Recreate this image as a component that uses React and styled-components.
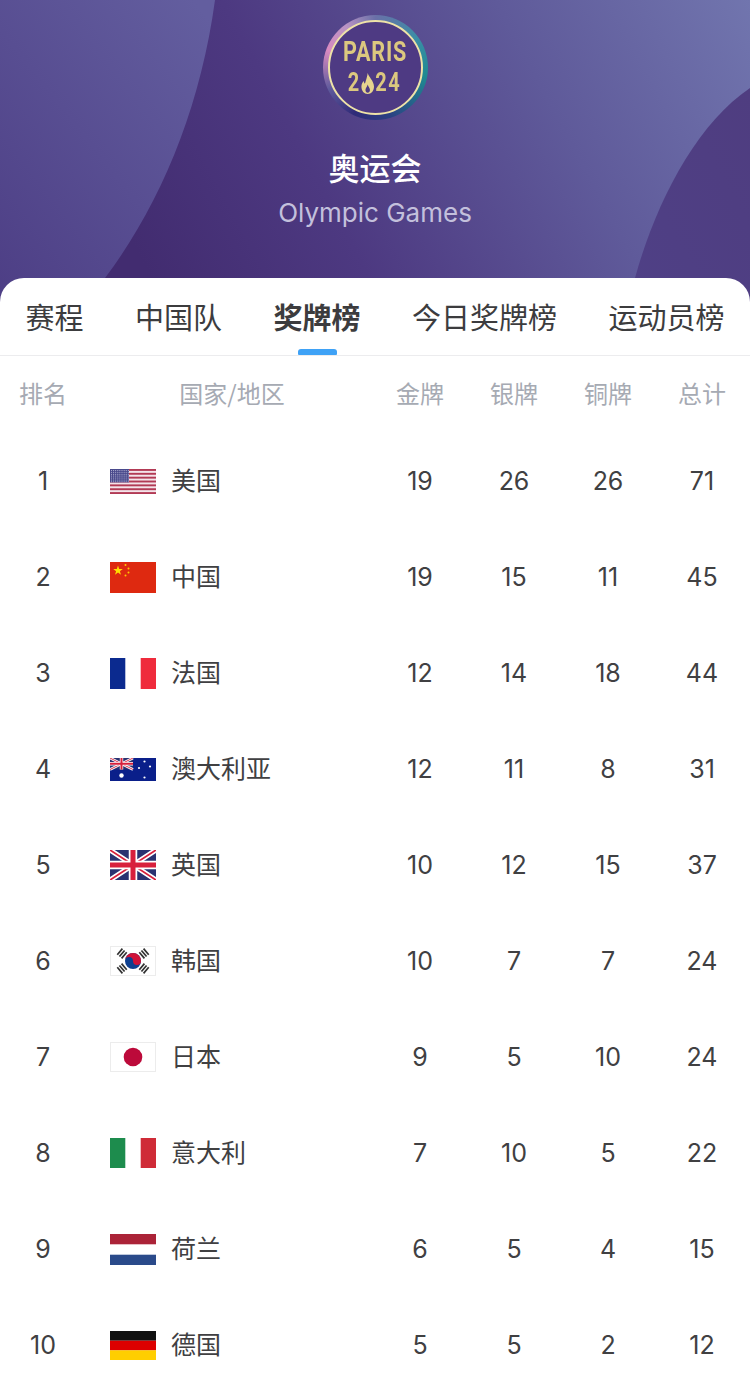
import React from "react";
import styled, { createGlobalStyle } from "styled-components";

const GlobalStyle = createGlobalStyle`
  html, body { margin: 0; padding: 0; background: #fff; overflow: hidden; }
  body { font-family: Inter, "Noto Sans CJK SC", sans-serif; }
`;

const Page = styled.div`
  width: 750px;
  height: 1385px;
  overflow: hidden;
  background: #fff;
`;

const Hero = styled.header`
  position: relative;
  height: 302px;
  margin-bottom: -24px;
  display: flex;
  flex-direction: column;
  align-items: center;
  padding-top: 15px;
  box-sizing: border-box;
  overflow: hidden;
  background: linear-gradient(62deg, #422c70 18%, #4d3981 42%, #5f5a9a 72%, #7175ae 100%);
`;

const HeroCurves = styled.svg`
  position: absolute;
  inset: 0;
  width: 750px;
  height: 302px;
`;

const Badge = styled.div`
  position: relative;
  width: 105px;
  height: 105px;
  border-radius: 50%;
  display: flex;
  align-items: center;
  justify-content: center;
  background: conic-gradient(from 0deg, #6a70a8 0deg, #3a8ea6 55deg, #1f8a92 100deg, #2b3f82 165deg, #2f2a78 205deg, #5f5a9c 245deg, #d98bc0 290deg, #b893c4 325deg, #6a70a8 360deg);
  filter: blur(0.5px);
`;

const BadgeFace = styled.div`
  width: 95px;
  height: 95px;
  box-sizing: border-box;
  border: 2.5px solid #eee2a8;
  border-radius: 50%;
  padding-bottom: 2px;
  background: #4e3a83;
  display: flex;
  flex-direction: column;
  align-items: center;
  justify-content: center;
  color: #dcc87f;
  font-family: "Roboto", sans-serif;
  font-weight: 700;
`;

const BadgeLine = styled.div`
  display: flex;
  align-items: center;
  font-size: ${(p) => p.$size}px;
  line-height: ${(p) => p.$line}px;
  letter-spacing: ${(p) => p.$track}px;
  transform: scaleX(${(p) => p.$squeeze});
  white-space: nowrap;
`;

const HeroTitle = styled.h1`
  position: relative;
  margin: 27px 0 0;
  font-family: "Noto Sans CJK SC", sans-serif;
  font-size: 31px;
  line-height: 40px;
  font-weight: 500;
  color: #fff;
`;

const HeroSubtitle = styled.div`
  position: relative;
  margin-top: 11px;
  font-family: Inter, sans-serif;
  font-size: 26px;
  line-height: 30px;
  color: #c3c0dc;
`;

const Card = styled.main`
  position: relative;
  background: #fff;
  border-radius: 24px 24px 0 0;
`;

const Tabs = styled.nav`
  display: flex;
  gap: 51.5px;
  height: 78px;
  box-sizing: border-box;
  padding: 0 0 0 25.5px;
  border-bottom: 1px solid #ececee;
  white-space: nowrap;
`;

const Tab = styled.div`
  position: relative;
  font-family: "Noto Sans CJK SC", sans-serif;
  font-size: 29px;
  line-height: 76px;
  height: 77px;
  color: #3c3c3e;
  font-weight: ${(p) => (p.$active ? 700 : 400)};

  ${(p) =>
    p.$active &&
    `&::after {
      content: "";
      position: absolute;
      left: 50%;
      bottom: 0;
      width: 39px;
      height: 6px;
      margin-left: -19.5px;
      border-radius: 3px 3px 1px 1px;
      background: #3fa2f6;
    }`}
`;

const Row = styled.div`
  display: grid;
  grid-template-columns: 86px 287px repeat(4, 94px);
  align-items: center;
  height: ${(p) => p.$height}px;
  font-size: ${(p) => p.$size}px;
  color: ${(p) => p.$color};
  font-family: Inter, "Noto Sans CJK SC", sans-serif;
`;

const Cell = styled.div`
  text-align: center;
`;

const HeadCell = styled(Cell)`
  font-family: "Noto Sans CJK SC", sans-serif;
  font-weight: 400;
  padding-bottom: 5px;
`;

const CountryHead = styled(HeadCell)`
  padding-left: 5px;
`;

const Country = styled.div`
  display: flex;
  align-items: center;
  padding-left: 24px;
  font-family: "Noto Sans CJK SC", sans-serif;
  gap: 16px;
`;

const CountryName = styled.span`
  padding-bottom: 4px;
  margin-left: -1px;
`;

const FlagBox = styled.svg`
  display: block;
  flex: none;
  width: 46px;
  height: ${(p) => p.$h}px;
`;

const Flag = ({ h = 31, vb = "0 0 46 31", children }) => (
  <FlagBox $h={h} viewBox={vb} preserveAspectRatio="none">
    {children}
  </FlagBox>
);

const Stars = ({ pts, r = 1, fill = "#fff" }) =>
  pts.map(([x, y], i) => <circle key={i} cx={x} cy={y} r={r} fill={fill} />);

const USFlag = () => {
  const usStars = [];
  for (let y = 0; y < 7; y++)
    for (let x = 0; x < 9; x++) usStars.push([1.5 + x * 2.1, 1.4 + y * 1.9]);
  return (
    <Flag h={25} vb="0 0 46 25">
      <rect width="46" height="25" fill="#f4e4ea" />
      {[0, 1, 2, 3, 4, 5, 6].map((i) => (
        <rect key={i} y={i * 3.85} width="46" height="1.9" fill="#b23a55" />
      ))}
      <rect width="19" height="13.4" fill="#4a4a8c" />
      <Stars pts={usStars} r={0.5} fill="#c9c9e2" />
    </Flag>
  );
};

const CNFlag = () => (
  <Flag>
    <rect width="46" height="31" fill="#de2910" />
    <path d="M8 3.5l1.2 3.5h3.6l-2.9 2.2 1.1 3.5L8 10.5l-3 2.2 1.1-3.5L3.2 7h3.6z" fill="#ffde00" />
    <Stars pts={[[15.5, 3], [18.5, 6.5], [18.5, 10.5], [15.5, 13.5]]} r={1} fill="#ffc800" />
  </Flag>
);

const FRFlag = () => (
  <Flag>
    <rect width="46" height="31" fill="#fff" />
    <rect width="15.3" height="31" fill="#0b2a8f" />
    <rect x="30.7" width="15.3" height="31" fill="#ef2b3c" />
  </Flag>
);

const Union = ({ w = 46, h = 30, thin = 3, bar = 5 }) => (
  <g>
    <rect width={w} height={h} fill="#2a3270" />
    <path d={`M0 0L${w} ${h}M${w} 0L0 ${h}`} stroke="#fff" strokeWidth={thin * 1.7} />
    <path d={`M0 0L${w} ${h}M${w} 0L0 ${h}`} stroke="#d8203c" strokeWidth={thin * 0.6} />
    <path d={`M${w / 2} 0V${h}M0 ${h / 2}H${w}`} stroke="#fff" strokeWidth={bar * 1.7} />
    <path d={`M${w / 2} 0V${h}M0 ${h / 2}H${w}`} stroke="#d8203c" strokeWidth={bar} />
  </g>
);

const AUFlag = () => (
  <Flag h={23} vb="0 0 46 23">
    <rect width="46" height="23" fill="#0a1f8a" />
    <Union w={23} h={11.5} thin={1.5} bar={2} />
    <Stars pts={[[11.5, 17.5]]} r={2.2} />
    <Stars pts={[[34.5, 3.5], [29, 10], [40, 8.5], [34.5, 19.5]]} r={1.1} />
  </Flag>
);

const UKFlag = () => (
  <Flag h={30} vb="0 0 46 30">
    <Union />
  </Flag>
);

const Trigram = ({ x, y, angle }) => (
  <g transform={`translate(${x} ${y}) rotate(${angle})`} stroke="#333" strokeWidth="1.7">
    <path d="M-4 -2.8H4M-4 0H4M-4 2.8H4" />
  </g>
);

const KRFlag = () => (
  <Flag h={30} vb="0 0 46 30">
    <rect x="0.5" y="0.5" width="45" height="29" fill="#fff" stroke="#ececec" />
    <circle cx="23" cy="15" r="8" fill="#0e3f8f" />
    <path d="M15 15a8 8 0 0 1 16 0a4 4 0 0 1-8 0a4 4 0 0 0-8 0z" fill="#cf1238" />
    <Trigram x={12} y={7.5} angle={-50} />
    <Trigram x={34} y={7.5} angle={50} />
    <Trigram x={12} y={22.5} angle={50} />
    <Trigram x={34} y={22.5} angle={-50} />
  </Flag>
);

const JPFlag = () => (
  <Flag h={30} vb="0 0 46 30">
    <rect x="0.5" y="0.5" width="45" height="29" fill="#fff" stroke="#ececec" />
    <circle cx="23" cy="15" r="9.3" fill="#bc0a3a" />
  </Flag>
);

const ITFlag = () => (
  <Flag h={30} vb="0 0 46 30">
    <rect width="46" height="30" fill="#fff" />
    <rect width="15.3" height="30" fill="#1d8c4d" />
    <rect x="30.7" width="15.3" height="30" fill="#cf2b37" />
  </Flag>
);

const NLFlag = () => (
  <Flag>
    <rect width="46" height="31" fill="#fff" />
    <rect width="46" height="10.3" fill="#ab2338" />
    <rect y="20.7" width="46" height="10.3" fill="#2a4a8a" />
  </Flag>
);

const DEFlag = () => (
  <Flag h={29} vb="0 0 46 29">
    <rect width="46" height="9.7" fill="#111" />
    <rect y="9.7" width="46" height="9.7" fill="#dd0000" />
    <rect y="19.3" width="46" height="9.7" fill="#ffce00" />
  </Flag>
);

const rows = [
  [1, USFlag, "美国", 19, 26, 26, 71],
  [2, CNFlag, "中国", 19, 15, 11, 45],
  [3, FRFlag, "法国", 12, 14, 18, 44],
  [4, AUFlag, "澳大利亚", 12, 11, 8, 31],
  [5, UKFlag, "英国", 10, 12, 15, 37],
  [6, KRFlag, "韩国", 10, 7, 7, 24],
  [7, JPFlag, "日本", 9, 5, 10, 24],
  [8, ITFlag, "意大利", 7, 10, 5, 22],
  [9, NLFlag, "荷兰", 6, 5, 4, 15],
  [10, DEFlag, "德国", 5, 5, 2, 12],
];

const tabs = ["赛程", "中国队", "奖牌榜", "今日奖牌榜", "运动员榜"];

export default function App() {
  return (
    <Page>
      <GlobalStyle />
      <Hero>
        <HeroCurves viewBox="0 0 750 302" aria-hidden="true">
          <defs>
            <linearGradient id="leftCurve" x1="0" y1="1" x2="0.9" y2="0">
              <stop offset="0" stopColor="#4d3e85" />
              <stop offset="1" stopColor="#635e9f" />
            </linearGradient>
            <linearGradient id="rightCurve" x1="0" y1="1" x2="1" y2="0">
              <stop offset="0" stopColor="#4f4086" />
              <stop offset="1" stopColor="#4f3d80" />
            </linearGradient>
          </defs>
          <path d="M0 0H215C200 110 160 205 105 278L92 302H0Z" fill="url(#leftCurve)" />
          <path d="M750 88C695 125 655 205 635 278L630 302H750Z" fill="url(#rightCurve)" />
        </HeroCurves>
        <Badge>
          <BadgeFace>
            <BadgeLine $size={27} $line={33} $track={1} $squeeze={0.8}>PARIS</BadgeLine>
            <BadgeLine $size={25} $line={28} $track={2} $squeeze={0.8}>
              2
              <svg width="18" height="21" viewBox="0 0 16 21" preserveAspectRatio="none">
                <path d="M8 0C9 4 15 8 15 13.5C15 18 12 21 8 21C4 21 1 18 1 13.5C1 11 2.5 9 3.5 8C4 10 4.5 10.5 5 10.5C6 7 7.5 4 8 0ZM8 11.5C7.2 14 5.5 15 5.5 17C5.5 18.6 6.6 19.7 8 19.7C9.4 19.7 10.5 18.6 10.5 17C10.5 15 8.8 14 8 11.5Z" fill="#e6d48e" fillRule="evenodd" />
              </svg>
              24
            </BadgeLine>
          </BadgeFace>
        </Badge>
        <HeroTitle>奥运会</HeroTitle>
        <HeroSubtitle>Olympic Games</HeroSubtitle>
      </Hero>
      <Card>
        <Tabs>
          {tabs.map((t) => (
            <Tab key={t} $active={t === "奖牌榜"}>{t}</Tab>
          ))}
        </Tabs>
        <Row $height={77} $size={24} $color="#a6aab3">
          <HeadCell>排名</HeadCell>
          <CountryHead>国家/地区</CountryHead>
          <HeadCell>金牌</HeadCell>
          <HeadCell>银牌</HeadCell>
          <HeadCell>铜牌</HeadCell>
          <HeadCell>总计</HeadCell>
        </Row>
        {rows.map(([rank, FlagIcon, name, gold, silver, bronze, total]) => (
          <Row key={rank} $height={96} $size={25} $color="#404042">
            <Cell>{rank}</Cell>
            <Country>
              <FlagIcon />
              <CountryName>{name}</CountryName>
            </Country>
            <Cell>{gold}</Cell>
            <Cell>{silver}</Cell>
            <Cell>{bronze}</Cell>
            <Cell>{total}</Cell>
          </Row>
        ))}
      </Card>
    </Page>
  );
}
